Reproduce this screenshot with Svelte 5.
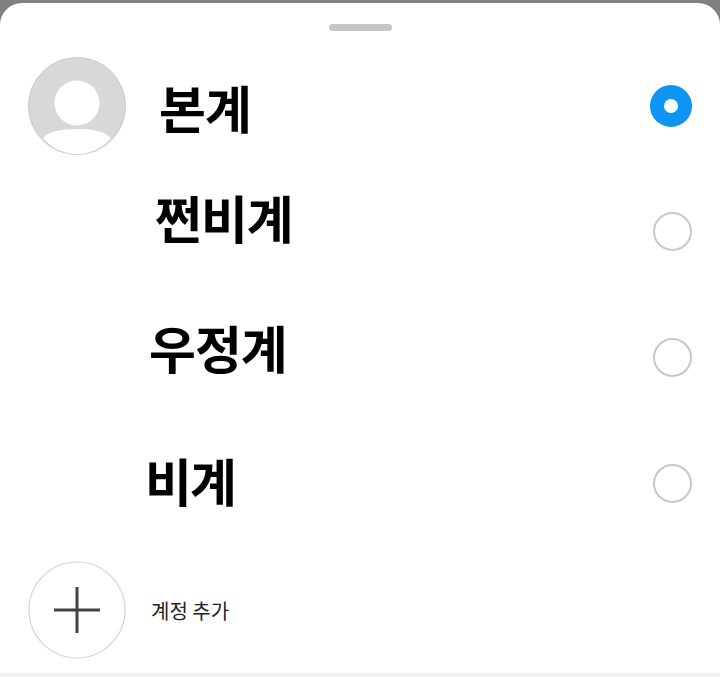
<script>
  // 계정 목록
  const accounts = [
    { name: '쩐비계', cls: 'zzin' },
    { name: '우정계', cls: 'friend' },
    { name: '비계', cls: 'sub' }
  ];
</script>

<div class="page">
  <div class="sheet">
    <div class="handle"></div>

    <div class="row first">
      <svg class="avatar" viewBox="0 0 98 98" width="98" height="98">
        <circle cx="49" cy="49" r="48.5" fill="#d8d8d8" stroke="#c9c9c9" />
        <circle cx="49" cy="46" r="22.5" fill="#fff" />
        <path d="M15 81 C20 75 32 72 49 72 C66 72 78 75 83 81 C75 91 62 97 49 97 C36 97 23 91 15 81 Z" fill="#fff" />
      </svg>
      <span class="label main">본계</span>
      <span class="radio on"></span>
    </div>

    {#each accounts as account}
      <div class="row">
        <span class="label {account.cls}">{account.name}</span>
        <span class="radio"></span>
      </div>
    {/each}

    <div class="row add">
      <svg class="plus" viewBox="0 0 98 98" width="98" height="98">
        <circle cx="49" cy="49" r="48" fill="#fff" stroke="#d4d4d4" stroke-width="1.2" />
        <path d="M26 49 H72 M49 26 V72" stroke="#444" stroke-width="3" fill="none" />
      </svg>
      <span class="add-text">계정 추가</span>
    </div>
  </div>
  <div class="strip"></div>
</div>

<style>
  :global(body) {
    margin: 0;
    background: #808080;
  }

  .page {
    width: 720px;
    height: 677px;
    padding-top: 3px;
    box-sizing: border-box;
    overflow: hidden;
    display: flex;
    flex-direction: column;
    font-family: "Noto Sans CJK KR", "Noto Sans", sans-serif;
  }

  .sheet {
    height: 670px;
    padding-top: 21px;
    box-sizing: border-box;
    background: #fff;
    border-radius: 22px 22px 0 0;
  }

  .strip {
    height: 4px;
    background: #f1f1f1;
  }

  .handle {
    width: 63px;
    height: 7px;
    margin: 0 auto 13px;
    border-radius: 4px;
    background: #c6c6c6;
  }

  .row {
    height: 126px;
    display: flex;
    align-items: center;
    padding-right: 28px;
    box-sizing: border-box;
  }

  .row.first {
    height: 124px;
    padding-left: 28px;
    padding-right: 28px;
  }

  .row.add {
    height: 128px;
    padding-left: 28px;
  }

  .label {
    font-size: 51px;
    font-weight: 700;
    line-height: 1;
    color: #000;
    letter-spacing: -1px;
  }

  .main {
    margin-left: 33px;
    margin-top: 2px;
  }

  .zzin {
    margin-left: 155px;
    margin-bottom: 28px;
  }

  .friend {
    margin-left: 149px;
    margin-bottom: 19px;
  }

  .sub {
    margin-left: 145px;
    margin-bottom: 5px;
    letter-spacing: -2px;
  }

  .radio {
    width: 39px;
    height: 39px;
    margin-left: auto;
    box-sizing: border-box;
    border: 2px solid #c8c8c8;
    border-radius: 50%;
    background: #fff;
  }

  .radio.on {
    width: 42px;
    height: 42px;
    border: 14px solid #0e95f4;
  }

  .add-text {
    margin-left: 25px;
    font-size: 20px;
    color: #222;
  }
</style>
